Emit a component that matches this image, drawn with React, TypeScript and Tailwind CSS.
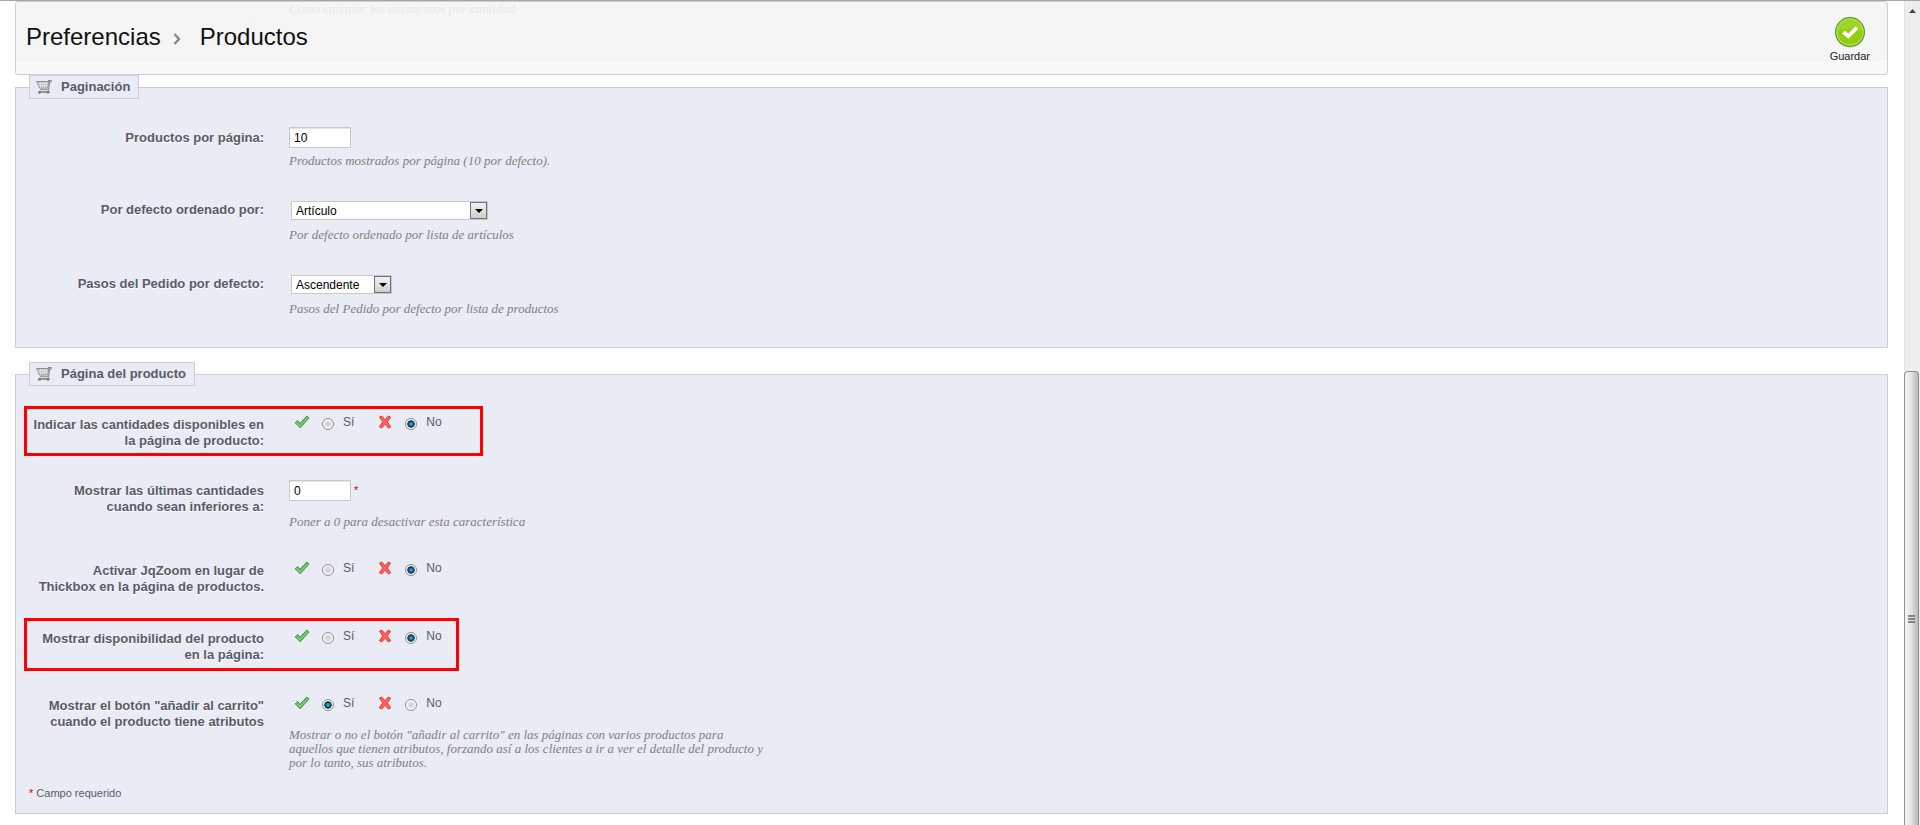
import { useId, useState } from "react";
import type { ReactNode } from "react";

function CartIcon() {
  return (
    <svg width="16" height="16" viewBox="0 0 16 16" fill="none" aria-hidden="true">
      <path d="M.5 2.500h12.500L11.500 9H3.500z" fill="#bdbdbd" stroke="#8f8f8f" strokeWidth="1" />
      <path d="M1.500 4.500h11M2 6.500h10M4.500 3v6M6.500 3v6M8.500 3v6M10.500 3v6" stroke="#e6e6e6" strokeWidth=".7" />
      <path d="M12 1.500h3v1.500h-1.500L12.500 11.500" stroke="#858585" strokeWidth="1.200" />
      <path d="M4 10.500h8.500" stroke="#a0a0a0" strokeWidth="1.500" />
      <path d="M2.500 13h11" stroke="#8c8c8c" strokeWidth="1.800" />
      <circle cx="3.500" cy="13.200" r="1.500" fill="#7d7d7d" />
      <circle cx="12" cy="13.200" r="1.500" fill="#7d7d7d" />
    </svg>
  );
}

function CheckIcon() {
  return (
    <svg width="16" height="14" viewBox="0 0 16 14" aria-hidden="true">
      <path
        d="M1.200 7.800 3.600 5.600 6 8.400 12.800 1 15 2.900 6.200 12.800z"
        fill="#6cc067"
        stroke="#3f9440"
        strokeWidth="1"
        strokeLinejoin="round"
      />
      <path d="M2.600 7.700 6.100 10.800 13.600 2.600" fill="none" stroke="#8fd388" strokeWidth=".8" />
    </svg>
  );
}

function CrossIcon() {
  return (
    <svg width="14" height="14" viewBox="0 0 14 14" aria-hidden="true">
      <path
        d="M1.500 2 3.800 1 7 4.700 10.300 1 12.600 2.200 9.300 7 12.800 11.800 10.400 13 7 9.300 3.700 13 1.300 11.700 4.700 7z"
        fill="#ff5f5f"
        stroke="#e83b3b"
        strokeWidth="1"
        strokeLinejoin="round"
      />
    </svg>
  );
}

function SaveIcon() {
  return (
    <svg width="32" height="32" viewBox="0 0 32 32" aria-hidden="true">
      <ellipse cx="16" cy="17.500" rx="14.500" ry="14" fill="#c9cbc6" />
      <circle cx="16" cy="16" r="15" fill="#579a16" />
      <circle cx="16" cy="16" r="13.200" fill="#93cc10" stroke="#c0e46b" strokeWidth="1.200" />
      <path d="M4 15a12 12 0 0 1 24 0c-7-3-16-3-24 0z" fill="#a9d832" opacity=".6" />
      <path d="M8 17.500 11 14.500 14.300 17.800 21.500 10.200 24.200 12.900 14.400 22.800z" fill="#fff" />
    </svg>
  );
}

function Panel({ title, children }: { title: string; children: ReactNode }) {
  return (
    <fieldset className="border border-[#cccdd9] bg-[#e9ecf4] pl-2">
      <legend className="ml-[5px] flex h-6 items-center gap-[9px] border border-[#cccdd9] bg-[#e9ecf4] pr-2 pl-1.5 text-[13px] font-bold">
        <CartIcon />
        {title}
      </legend>
      {children}
    </fieldset>
  );
}

const rowClass = "flex gap-[25px] border-[3px] pl-1.5";
const labelClass = "w-[231px] shrink-0 pt-2 text-right text-[13px] leading-4 font-bold [text-shadow:0_1px_0_#fff]";

function Hint({ className, children }: { className: string; children: ReactNode }) {
  return (
    <p className={`${className} max-w-[478px] font-['Liberation_Serif',serif] text-[13px] leading-[14px] text-[#7f7f7f] italic`}>
      {children}
    </p>
  );
}

function TextRow({ label, value, hint, hintClass, required }: {
  label: string;
  value: string;
  hint: string;
  hintClass: string;
  required?: boolean;
}) {
  const id = useId();
  const [text, setText] = useState(value);

  return (
    <div className={`${rowClass} border-transparent pb-1`}>
      <label htmlFor={id} className={labelClass}>{label}</label>
      <div className="pt-[5px]">
        <div className="flex gap-[3px]">
          <input
            id={id}
            type="text"
            value={text}
            required={required}
            onChange={(e) => setText(e.target.value)}
            className="h-[21px] w-[62px] border border-[#c8c8c8] bg-white px-1 text-[12px] text-black shadow-[inset_0_1px_1px_#e4e4e4]"
          />
          {required && <sup className="top-0 pt-1 text-[11px] leading-3 text-[#cc0000]">*</sup>}
        </div>
        <Hint className={hintClass}>{hint}</Hint>
      </div>
    </div>
  );
}

function SelectRow({ label, options, hint, width }: {
  label: string;
  options: string[];
  hint: string;
  width: string;
}) {
  const id = useId();

  return (
    <div className={`${rowClass} border-transparent pb-1`}>
      <label htmlFor={id} className={labelClass}>{label}</label>
      <div className="pt-[5px]">
        <div className={`relative m-0.5 h-[19px] ${width}`}>
          <select
            id={id}
            className="block h-full w-full appearance-none border border-[#c8c8c8] bg-white pr-5 pl-1 text-[12px] leading-4 text-black"
          >
            {options.map((o) => (
              <option key={o}>{o}</option>
            ))}
          </select>
          <span className="pointer-events-none absolute inset-y-px right-px flex w-[17px] items-center justify-center border border-[#707070] bg-linear-to-b from-[#f2f2f2] to-[#cfcfcf]">
            <svg width="8" height="4" viewBox="0 0 8 4" aria-hidden="true">
              <path d="M0 0h8L4 4z" fill="#000" />
            </svg>
          </span>
        </div>
        <Hint className="mt-2">{hint}</Hint>
      </div>
    </div>
  );
}

const radioClass =
  "size-3 appearance-none rounded-full border border-[#8e8f8f] bg-[radial-gradient(circle,#d4d7da_25%,#fff_70%)] mt-1 checked:bg-[radial-gradient(circle,#56c3ee_0%,#12608f_28%,#0b2c4a_48%,#f4f4f4_56%)]";

function SwitchRow({ label, value, hint, boxClass = "border-transparent pb-1" }: {
  label: string;
  value: boolean;
  hint?: string;
  boxClass?: string;
}) {
  const id = useId();
  const [on, setOn] = useState(value);

  return (
    <div role="radiogroup" aria-labelledby={id} className={`${rowClass} ${boxClass}`}>
      <span id={id} className={labelClass}>{label}</span>
      <div className="pt-[5px]">
        <div className="flex h-4 items-center pl-[5px] text-[12px] leading-4">
          <label className="flex items-center">
            <CheckIcon />
            <input
              type="radio"
              name={id}
              checked={on}
              onChange={() => setOn(true)}
              className={`ml-3 mr-[9px] ${radioClass}`}
            />
            Sí
          </label>
          <label className="ml-6 flex items-center">
            <CrossIcon />
            <input
              type="radio"
              name={id}
              checked={!on}
              onChange={() => setOn(false)}
              className={`ml-[13px] mr-[9px] ${radioClass}`}
            />
            No
          </label>
        </div>
        {hint && <Hint className="mt-[17px]">{hint}</Hint>}
      </div>
    </div>
  );
}

function ScrollRail() {
  return (
    <div aria-hidden="true" className="flex h-screen w-4 shrink-0 flex-col bg-[#eeeeee]">
      <div className="flex h-[370px] justify-center border-l border-[#e4e4e4] pt-2">
        <svg width="7" height="4" viewBox="0 0 7 4">
          <path d="M0 4h7L3.500 0z" fill="#444" />
        </svg>
      </div>
      <div className="mr-px flex flex-1 justify-center rounded-t-sm border-x border-t border-[#8f8f8f] bg-linear-to-r from-[#f5f5f5] via-[#e2e2e4] to-[#b9b9bd] pt-[243px]">
        <svg width="7" height="8" viewBox="0 0 7 8">
          <path d="M0 1h7M0 4h7M0 7h7" stroke="#666" strokeWidth="1.300" />
        </svg>
      </div>
    </div>
  );
}

export default function App() {
  return (
    <div className="flex min-h-screen border-t border-[#a5a5a5] bg-white font-['Liberation_Sans',Arial,sans-serif] text-[#585a69]">
      <main className="min-w-0 flex-1 pr-4 pb-2 pl-[15px]">
        <header className="relative rounded-[3px] border border-[#cfcfcf] bg-[#f5f5f5]">
          <p className="absolute top-0 left-[273px] font-['Liberation_Serif',serif] text-[13px] leading-[14px] text-[#e9e9e9] italic">
            Como calcular los descuentos por cantidad
          </p>
          <div className="flex h-[58px] justify-between border-b border-[#f0f0f0] pr-[17px] pl-2.5">
            <h1 className="flex items-center pt-3 text-[24px] leading-8 text-[#111]">
              Preferencias
              <svg width="8" height="12" viewBox="0 0 8 12" className="mt-1 ml-3 mr-[19px]" aria-hidden="true">
                <path d="M1.500 1 6 6l-4.500 5" fill="none" stroke="#8a8a8a" strokeWidth="2.400" />
              </svg>
              Productos
            </h1>
            <button type="button" className="flex flex-col items-center self-start pt-3.5 text-[11px] leading-4 text-[#222]">
              <SaveIcon />
              Guardar
            </button>
          </div>
          <div className="h-3.5 rounded-b-[3px] bg-[#f8f8f8]" />
        </header>

        <Panel title="Paginación">
          <div className="flex flex-col gap-4 pt-5 pb-6">
            <TextRow
              label="Productos por página:"
              value="10"
              hint="Productos mostrados por página (10 por defecto)."
              hintClass="mt-1.5"
            />
            <SelectRow
              label="Por defecto ordenado por:"
              options={["Artículo"]}
              width="w-[197px]"
              hint="Por defecto ordenado por lista de artículos"
            />
            <SelectRow
              label="Pasos del Pedido por defecto:"
              options={["Ascendente", "Descendente"]}
              width="w-[101px]"
              hint="Pasos del Pedido por defecto por lista de productos"
            />
          </div>
        </Panel>

        <div className="mt-3.5">
          <Panel title="Página del producto">
            <div className="flex flex-col gap-4 pt-5">
              <SwitchRow
                label="Indicar las cantidades disponibles en la página de producto:"
                value={false}
                boxClass="w-[459px] border-[#ff0000] pb-1"
              />
              <TextRow
                label="Mostrar las últimas cantidades cuando sean inferiores a:"
                value="0"
                required
                hint="Poner a 0 para desactivar esta característica"
                hintClass="mt-3.5"
              />
              <SwitchRow label="Activar JqZoom en lugar de Thickbox en la página de productos." value={false} />
              <SwitchRow
                label="Mostrar disponibilidad del producto en la página:"
                value={false}
                boxClass="w-[435px] border-[#ff0000] pt-0.5 pb-[5px]"
              />
              <SwitchRow
                label={'Mostrar el botón "añadir al carrito" cuando el producto tiene atributos'}
                value={true}
                hint={
                  'Mostrar o no el botón "añadir al carrito" en las páginas con varios productos para aquellos que tienen atributos, forzando así a los clientes a ir a ver el detalle del producto y por lo tanto, sus atributos.'
                }
              />
            </div>
            <p className="pt-2 pb-3 pl-[5px] text-[11px] leading-4">
              <span className="text-[#cc0000]">*</span> Campo requerido
            </p>
          </Panel>
        </div>
      </main>
      <ScrollRail />
    </div>
  );
}
